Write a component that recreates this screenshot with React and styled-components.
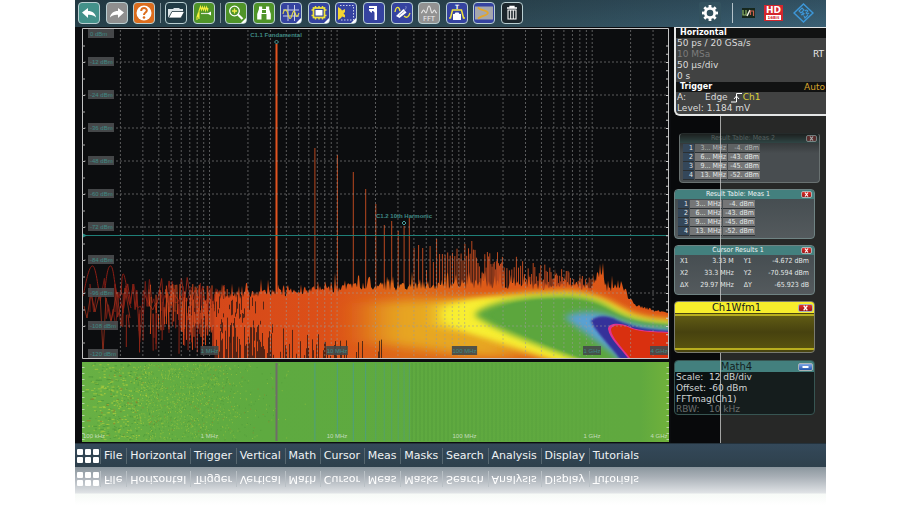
import styled, { createGlobalStyle, css } from 'styled-components';

const GlobalStyle = createGlobalStyle`
  * {
    box-sizing: border-box;
  }

  body {
    margin: 0;
    background: #fff;
    font-family: 'DejaVu Sans', Verdana, sans-serif;
  }

  button {
    font: inherit;
    color: inherit;
    cursor: pointer;
  }
`;

const Page = styled.div`
  padding: 0 74px 0 75px;
  overflow: hidden;
`;

const Screen = styled.main`
  background: #0b0c0f;
`;

/* ---------- toolbar ---------- */

const Toolbar = styled.header`
  display: flex;
  align-items: center;
  height: 27px;
  padding: 0 12px 1px 3px;
  background: linear-gradient(rgba(20, 32, 40, 0.25), rgba(20, 32, 40, 0)), linear-gradient(90deg, #26404a, #2f4b57 60%, #3b6074);
`;

const ToolGroup = styled.div`
  display: flex;
  gap: 5px;
  justify-content: space-between;
  flex: 0 1 ${(props) => props.$basis}px;
`;

const ToolDivider = styled.span`
  width: 1px;
  height: 20px;
  margin: 0 4px 0 5px;
  background: #7f939b;
`;

const ToolButton = styled.button`
  width: 22px;
  height: 22px;
  flex: none;
  padding: 0;
  border: 1px solid #b9cfd2;
  border-radius: 4px;
  background: ${(props) => props.$color};

  svg {
    display: block;
    width: 20px;
    height: 20px;
  }
`;

const StatusGroup = styled.div`
  display: flex;
  align-items: center;
  margin-left: auto;
`;

const GearButton = styled(ToolButton)`
  border: 0;
  border-radius: 2px;
  background: #33525f;

  svg {
    width: 22px;
    height: 22px;
  }
`;

const StatusDivider = styled(ToolDivider)`
  margin: 0 9px 0 11px;
  background: #b4c2c9;
`;

const HdBadge = styled.div`
  width: 19px;
  height: 16px;
  margin: 0 10px 0 9px;
  padding: 1px 2px;
  background: #d3262d;
  color: #fff;
  font-size: 9px;
  font-weight: bold;
  line-height: 8px;
  text-align: center;

  small {
    display: block;
    height: 5px;
    margin-top: 1px;
    background: #fff;
    color: #d3262d;
    font-size: 4px;
    line-height: 5px;
  }
`;

/* ---------- plots ---------- */

const Workspace = styled.section`
  display: flex;
`;

const PlotColumn = styled.div`
  flex: 1;
  min-width: 0;
  display: flex;
  flex-direction: column;
  gap: 3px;
  padding: 1px 2px 1px 7px;

  svg {
    display: block;
    width: 100%;
    height: auto;
  }
`;

const AxisText = styled.text`
  font-family: 'Liberation Sans', Arial, sans-serif;
  font-size: 6px;
  font-weight: ${(props) => (props.$bold ? 'bold' : 'normal')};
  fill: ${(props) => props.$fill || '#3f8a85'};
`;

/* ---------- side panel ---------- */

const SidePanel = styled.aside`
  position: relative;
  flex: 0 0 155px;
  display: flex;
  flex-direction: column;
  padding-left: 3px;
  background: linear-gradient(90deg, #08090b 49px, #272827 49px);

  &::after {
    content: '';
    position: absolute;
    top: 89px;
    bottom: 0;
    left: 49px;
    width: 1px;
    background: rgba(205, 205, 205, 0.75);
  }
`;

const InfoBox = styled.section`
  position: relative;
  margin-bottom: 17px;
  border: solid #e4e6e6;
  border-width: 1px 0 2px 2px;
  border-radius: 0 0 0 6px;
  background: #414242;
  color: #dcdcdc;
  font-size: 9px;
  line-height: 11px;
  overflow: hidden;
`;

const InfoTitle = styled.h2`
  display: flex;
  justify-content: space-between;
  margin: 0;
  padding: 0 1px 0 4px;
  background: #111212;
  color: #fff;
  font-size: 8px;
  font-weight: bold;
  line-height: 10px;

  span {
    color: #d8a52c;
    font-size: 9px;
    font-weight: normal;
  }
`;

const InfoRow = styled.div`
  display: flex;
  justify-content: space-between;
  padding: 0 2px 0 1px;
  color: ${(props) => (props.$dim ? '#7c7c7c' : '#dcdcdc')};
  white-space: nowrap;

  b {
    color: #e8e8e8;
    font-weight: normal;
  }
`;

const TriggerRow = styled(InfoRow)`
  justify-content: flex-start;

  span {
    width: 28px;
  }

  svg {
    width: 11px;
    height: 11px;
    margin: 0 1px 0 3px;
  }

  em {
    color: #dcd23a;
    font-style: normal;
  }
`;

const Card = styled.section`
  margin: 0 11px 6px 0;
  border: 1px solid #6f8383;
  border-radius: 4px;
  background: linear-gradient(#434b4f, #545a5d);
  color: #e4e8e8;
  font-family: 'DejaVu Sans Condensed', 'DejaVu Sans', sans-serif;
  font-size: 7px;
  overflow: hidden;
  ${(props) =>
    props.$ghost &&
    css`
      margin: 0 6px 6px 5px;
      border-color: #697171;
      border-top-color: #252b2b;
      background: linear-gradient(#242828, #484d50 40%, #484d50);
    `}
`;

const CardTitle = styled.h3`
  display: flex;
  align-items: center;
  margin: 0;
  padding-right: 2px;
  background: ${(props) => (props.$ghost ? 'linear-gradient(#1d2120, #2f4544)' : '#43807e')};
  color: ${(props) => (props.$ghost ? '#56605f' : '#f0f5f5')};
  font-size: 7px;
  font-weight: normal;
  line-height: 9px;

  span {
    flex: 1;
    text-align: center;
  }
`;

const CloseButton = styled.button`
  display: block;
  width: 11px;
  height: 7px;
  padding: 0;
  border: 1px solid #a9b4b4;
  border-radius: 2px;
  background: ${(props) => (props.$ghost ? '#7b2b2b' : 'linear-gradient(#e0302c, #9a1414)')};
  opacity: ${(props) => (props.$ghost ? 0.6 : 1)};

  svg {
    display: block;
    width: 100%;
    height: 100%;
  }
`;

const ResultTable = styled.table`
  margin: 1px 0 2px 2px;
  border-spacing: 1px 0;
  border-collapse: separate;
  line-height: 8px;

  th,
  td {
    height: 9px;
    padding: 0 1px;
    border-bottom: 1px solid #2b3033;
    font-weight: normal;
    text-align: right;
    white-space: nowrap;
  }

  th {
    width: 11px;
    background: #34475a;
  }

  td {
    width: 32px;
    background: #757677;
  }

  tr:first-child td {
    color: ${(props) => (props.$ghost ? '#b5b8b8' : '#e4e8e8')};
    background: ${(props) => (props.$ghost ? '#5f6263' : '#757677')};
  }
`;

const CursorTable = styled.table`
  width: 100%;
  padding: 0 5px 3px;
  border-spacing: 0;
  line-height: 12px;

  th {
    padding: 0;
    font-weight: normal;
    text-align: left;
  }

  td {
    padding: 0;
    text-align: right;
    white-space: nowrap;
  }

  td + th {
    padding-left: 10px;
  }
`;

const WaveCard = styled(Card)`
  position: relative;
  z-index: 1;
  margin-bottom: 7px;
  border-color: #7a7b70;
  background: #4a4510;
`;

const SignalTitle = styled(CardTitle)`
  padding-right: 1px;
  background: ${(props) => props.$color};
  color: #14201f;
  font-family: 'DejaVu Sans', sans-serif;
  font-size: 10px;
  line-height: 11px;

  ${CloseButton} {
    width: 15px;
    height: 8px;
  }
`;

const MinimizeButton = styled(CloseButton)`
  background: linear-gradient(#7fa6e6, #2456ac);
`;

const Trace = styled.div`
  height: 36px;
  margin: 1px 0 2px;
  border: solid #b8ae1e;
  border-width: 2px 0;
  background: linear-gradient(#605b14, #47420f 50%, #57520f);
`;

const MathCard = styled(Card)`
  margin-bottom: 0;
  border-color: #375552;
  background: linear-gradient(90deg, #0b1112 45px, #151d1d 45px);
  font-family: 'DejaVu Sans', sans-serif;
  font-size: 9px;
  line-height: 11px;
`;

const MathRow = styled.div`
  display: flex;
  padding-left: 1px;
  color: ${(props) => (props.$dim ? '#6a6d6d' : '#d0d4d4')};
  line-height: ${(props) => (props.$dim ? 9 : 11)}px;
  white-space: nowrap;

  span {
    width: 33px;
  }
`;

/* ---------- menu ---------- */

const MenuBar = styled.nav`
  display: flex;
  align-items: center;
  height: 24px;
  padding-left: 2px;
  border-top: 1px solid #24323c;
  background: linear-gradient(#34495a, #2e404c);
  color: #eef2f4;
`;

const GridButton = styled.button`
  display: grid;
  grid-template-columns: repeat(3, 6px);
  grid-auto-rows: 6px;
  gap: 2px;
  margin-right: 1px;
  padding: 0;
  border: 0;
  background: none;

  i {
    border-radius: 1px;
    background: #fff;
  }
`;

const MenuList = styled.div`
  display: flex;
  flex: 0 1 542px;
  justify-content: space-between;
`;

const MenuItem = styled.button`
  height: 16px;
  padding: 0 3px;
  border: 0;
  border-left: 1px solid #56666f;
  background: none;
  font-size: 11px;
  line-height: 14px;
`;

const Reflection = styled.div`
  height: 39px;
  background: linear-gradient(#8b969e, #a9b0b7 10px, #e0e3e6 26px, #f7faf7 27px, #fff 38px);

  ${MenuBar} {
    border: 0;
    background: none;
    color: #fff;
    transform: scaleY(-1);
  }

  ${MenuItem} {
    border-color: #b9c0c5;
  }
`;

/* ---------- icons ---------- */

const Corner = () => <path d='M20 15v3a2 2 0 0 1-2 2h-3z' fill='#fff' />;

const arrow = <path d='M17 9.500 11 5v3c-4.500 0-7.500 2.500-8 6.500 2-2 4.500-3 8-2.700V15z' fill='#fff' />;

const icons = {
  undo: <g transform='translate(20 0) scale(-1 1)'>{arrow}</g>,
  redo: arrow,
  help: (
    <>
      <circle cx='10' cy='10' r='7.500' fill='#fff' />
      <path d='M7.200 8c0-4 5.800-3.800 5.600-.4C12.700 9.600 10 9.500 10 12' fill='none' stroke='#dc6d1d' strokeWidth='2' />
      <circle cx='10' cy='14.500' r='1.300' fill='#dc6d1d' />
    </>
  ),
  open: (
    <>
      <path d='M2 15V6h5l1-1h5l1 1h3v3H7z' fill='#dfe6e9' />
      <path d='M6 8.500h12.500L15 15H2.500z' fill='#fff' stroke='#1d333c' strokeWidth='.8' />
    </>
  ),
  preset: (
    <>
      <path d='M3 17v-3l1-3 1 5V8l1.500-4.500L7.500 7l1-3 1 3 1-3 1 3.500 1-3.500 1 3 .5-2' fill='none' stroke='#f3ee3c' strokeWidth='1.100' />
      <path d='M7 10.500h10' stroke='#dfe9d0' strokeWidth='1.200' />
      <path d='m13.500 10.500 3.500-2v4z' fill='#fff' />
    </>
  ),
  zoom: (
    <>
      <circle cx='8.500' cy='8' r='4.800' fill='none' stroke='#fff' strokeWidth='1.300' />
      <path d='M8.500 5.500v5M6 8h5' stroke='#f4ee4a' strokeWidth='1.300' />
      <path d='m12 11.500 4.500 4.500' stroke='#fff' strokeWidth='2.200' />
      <Corner />
    </>
  ),
  find: (
    <path
      d='M5 3.500h3.200V6H12V3.500h3.200V6l1.600 5v5.500h-4.300V11h-5v5.500H3.200V11L5 6zM8 7v3h4V7z'
      fill='#fff'
      fillRule='evenodd'
    />
  ),
  cross: (
    <>
      <path d='M7 2v16M13.500 2v16M2 7h16M2 13h16' stroke='#c9cfe8' strokeWidth='1' />
      <path d='M2 11c1-5.500 3.500-5.500 5 0s2.500 6 4 1 2.500-5 3.500-1 2 3 3.500-1' fill='none' stroke='#e0d84c' strokeWidth='1.100' />
      <Corner />
    </>
  ),
  chip: (
    <>
      <rect x='4.500' y='5' width='11' height='9.500' fill='none' stroke='#efe33a' strokeWidth='1.700' />
      <rect x='6.500' y='7' width='7' height='5.500' fill='#fff' />
      <path
        d='M6.500 3v2M10 3v2M13.500 3v2M6.500 14.500v2M10 14.500v2M13.500 14.500v2M2.500 7h2M2.500 12.500h2M15.500 7h2M15.500 12.500h2'
        stroke='#efe33a'
        strokeWidth='1.500'
      />
      <Corner />
    </>
  ),
  gate: (
    <>
      <path d='M4 2.500h13.500V17H4' fill='none' stroke='#c9cfe8' strokeWidth='1' strokeDasharray='1.500 1.500' />
      <path d='M2 4l3 2 1 1.500L9 6v3l-1.500 1.500L9 12v2.500l-3-1-1 1.500-3 2z' fill='#f3d433' />
      <Corner />
    </>
  ),
  caliper: <path d='M5 3h8v14h-2.500V9.500L9 8H8v1.500H7L5 7.500V6h5V5H5z' fill='#fff' />,
  probe: (
    <>
      <path d='M3 9c1-6 4-6 5-1M12 13c3 3 5 0 6-3' fill='none' stroke='#f0e63c' strokeWidth='1.300' />
      <path d='m4 13 7.500-7 3 3.500-7 5.500z' fill='#fff' />
      <path d='m7 12.500 5.500-4.500M12.500 7c2-2 2-3 1-4' stroke='#8f97c9' strokeWidth='.9' fill='none' />
    </>
  ),
  fft: (
    <>
      <path
        d='M2 10c1.500 0 1.500-3 2.500-3S6 10 7 10s1.500-7 3-7 2 7 3 7 1.500-3 2.500-3S16 10 18 10'
        fill='none'
        stroke='#e8e8e8'
        strokeWidth='1.100'
      />
      <text x='10' y='17.500' fontSize='7' textAnchor='middle' fill='#eee'>
        FFT
      </text>
    </>
  ),
  trigger: (
    <>
      <text x='10' y='5.500' fontSize='6' fontWeight='bold' textAnchor='middle' fill='#fff'>
        T
      </text>
      <path d='M2 15h1.500L5.500 7h9l2 8H18' fill='none' stroke='#f0e23a' strokeWidth='1.500' />
      <path d='M6 11h1.500l1-1.500h3l1 1.500H14v6H6z' fill='#fff' />
    </>
  ),
  mask: (
    <>
      <rect x='1' y='3.500' width='18' height='13' fill='#a5a7ad' />
      <path d='M4 4.500c2 3 9 2.500 10 5.500-1 3-5 2-10 5.500' fill='none' stroke='#e2a62c' strokeWidth='1.800' />
    </>
  ),
  trash: (
    <>
      <path d='M5 5h10M8 4.500V3.500h4v1' stroke='#fff' strokeWidth='1.300' fill='none' />
      <path d='M6 7h8v9H6z' fill='none' stroke='#fff' strokeWidth='1.100' />
      <path d='M8.700 7v9M11.300 7v9' stroke='#fff' strokeWidth='1' />
    </>
  ),
};

const Icon = ({ name }) => (
  <svg viewBox='0 0 20 20' aria-hidden='true'>
    {icons[name]}
  </svg>
);

const Gear = () => (
  <svg viewBox='0 0 22 22' aria-hidden='true'>
    <circle cx='11' cy='11' r='4.700' fill='none' stroke='#fff' strokeWidth='2.800' />
    {[0, 45, 90, 135, 180, 225, 270, 315].map((angle) => (
      <rect key={angle} x='9.600' y='3' width='2.800' height='3' fill='#fff' transform={`rotate(${angle} 11 11)`} />
    ))}
  </svg>
);

const WaveStatus = () => (
  <svg width='13' height='10' viewBox='0 0 13 10' aria-hidden='true'>
    <rect width='13' height='10' fill='#16271c' />
    <path d='M1 2v5h3V2' stroke='#8fb86a' strokeWidth='1.200' fill='none' />
    <path d='m5 8 3-6' stroke='#f0f0e0' strokeWidth='1.500' />
    <path d='M8.500 7V3h3v5' stroke='#c7604c' strokeWidth='1.200' fill='none' />
  </svg>
);

const Diamond = () => (
  <svg width='21' height='20' viewBox='0 0 21 20' aria-hidden='true'>
    <path d='M10.500 1 20 10l-9.500 9L1 10z' fill='none' stroke='#3d97d8' strokeWidth='1.500' />
    <path
      d='M6 8l3-3 2 2-3 3zm2.500 1 3 2M11 12c-2 0-2-2 0-2m1-2c2-2 4 0 2 1s0 3 2 1m-6 1-2 1m3 1 1 2 3-3'
      fill='none'
      stroke='#3d97d8'
      strokeWidth='1.100'
    />
  </svg>
);

const Cross = () => (
  <svg viewBox='0 0 9 5' aria-hidden='true'>
    <path d='m3 .5 3 4M6 .5l-3 4' stroke='#fff' strokeWidth='1.200' />
  </svg>
);

const Minus = () => (
  <svg viewBox='0 0 9 5' aria-hidden='true'>
    <path d='M2 2.500h5' stroke='#fff' strokeWidth='1.500' />
  </svg>
);

/* ---------- plot data ---------- */

const DECADE = 127.55;
const LEFT = 82;
const RIGHT = 669;
const FUNDAMENTAL = 276.5;

const createRandom = (seed) => {
  let value = seed;
  return () => {
    value = (value * 1664525 + 1013904223) % 4294967296;
    return value / 4294967296;
  };
};

// x position for a frequency in units of 100 kHz
const freqX = (f) => LEFT + DECADE * Math.log10(f);
const harmonicX = (n) => FUNDAMENTAL + DECADE * Math.log10(n);

const gridX = [];
for (let decade = 0; decade < 5; decade++) {
  for (let step = 1; step < 10; step++) {
    const x = freqX(step * 10 ** decade);
    if (x > LEFT + 1 && x < RIGHT - 2) gridX.push(x);
  }
}
const gridY = [1, 2, 3, 4, 5, 6, 7, 8, 9].map((i) => 29 + 33 * i);

const interpolate = (points, x) => {
  for (let i = 1; i < points.length; i++) {
    if (x <= points[i][0]) {
      const [x0, y0] = points[i - 1];
      const [x1, y1] = points[i];
      return y0 + ((y1 - y0) * (x - x0)) / (x1 - x0);
    }
  }
  return points[points.length - 1][1];
};

const ceiling = [
  [82, 296], [200, 296], [300, 290], [350, 286], [420, 285], [500, 284], [560, 285], [592, 286],
  [597, 276], [600, 270], [604, 279], [609, 291], [613, 283], [622, 284], [628, 296], [636, 305], [650, 309], [669, 314],
];

const buildNoise = () => {
  const random = createRandom(41);
  let path = 'M215,359';
  for (let x = 215; x <= RIGHT; x++) {
    const spread = x > 630 ? 3 : 9;
    const spike = x < 630 && random() > 0.86 ? 4 + random() * 10 : 0;
    const y = interpolate(ceiling, x) + (random() - 0.4) * spread - spike;
    path += `L${x},${y.toFixed(1)}`;
  }
  return `${path}L${RIGHT},359Z`;
};

// dark slots rising from the floor, and gaps in the thin left part of the trace
const buildSlots = () => {
  const random = createRandom(9);
  let path = '';
  for (let x = 215; x < 390; x++) {
    const t = (x - 215) / 175;
    if (random() < 0.85 - t * 0.7) {
      const depth = (4 + random() * 40) * (1 - t * 0.55);
      path += `M${x + 0.5},359V${(359 - depth).toFixed(1)}`;
    }
    if (random() < 0.7 - t * 2) {
      const y = 294 + random() * 34;
      path += `M${x + 0.5},${y.toFixed(1)}v${(3 + random() * 14).toFixed(1)}`;
    }
  }
  return path;
};

// separate strokes that grow denser towards the solid part of the trace
const buildStrokes = (seed, from, to, density) => {
  const random = createRandom(seed);
  let path = '';
  for (let x = from; x < to; x += 0.8) {
    const t = (x - from) / (to - from);
    if (random() < density * (0.12 + t)) {
      const y = 284 + random() * 32;
      const lean = (random() - 0.5) * 3 * (1 - t);
      path += `M${x.toFixed(1)},${y.toFixed(1)}l${lean.toFixed(1)},${(8 + random() * (30 + t * 14)).toFixed(1)}`;
    }
  }
  return path;
};

const buildStreaks = (seed, from, to, step) => {
  const random = createRandom(seed);
  let path = `M${from},312`;
  let up = true;
  for (let x = from; x < to; x += step * (0.5 + random())) {
    const y = up ? 276 + random() * 34 : 300 + random() * random() * 58;
    path += `L${x.toFixed(1)},${y.toFixed(1)}`;
    up = !up;
  }
  return path;
};

const peakTops = [
  42, 148, 155, 172, 189, 204, 225, 221, 231, 226, 218, 248, 245, 248, 270, 246, 262, 239, 254, 254,
];

const denseTops = [
  [450, 248], [454, 244], [461, 253], [466, 245], [470, 240], [474, 241], [480, 264], [487, 254], [496, 253],
  [508, 260], [520, 257], [527, 264], [541, 265], [552, 266], [561, 269], [575, 277], [590, 278],
];

const buildPeaks = () => {
  const random = createRandom(77);
  let path = '';
  peakTops.forEach((top, i) => {
    if (i > 0) path += `M${harmonicX(i + 1).toFixed(1)},${top}V290`;
  });
  for (let n = 21; n < 300; n += n > 60 ? 3 : 1) {
    const x = harmonicX(n);
    const top = interpolate(denseTops, x) + random() * 20 - 3;
    path += `M${x.toFixed(1)},${Math.min(top, 288).toFixed(1)}V290`;
  }
  return path;
};

// long and sparse on the left, turning into fine grain that thins out to the right
const buildSpecks = (seed, count) => {
  const random = createRandom(seed);
  let path = '';
  for (let i = 0; i < count; i++) {
    const x = LEFT + 1 + 230 * (random() * 0.55 + random() * random() * 0.45);
    const y = 364 + random() * 76;
    const length = 0.7 + random() * Math.max(0, 4 - (x - LEFT) / 18);
    path += `M${x.toFixed(1)},${y.toFixed(1)}h${length.toFixed(1)}`;
  }
  return path;
};

const noise = buildNoise();
const slots = buildSlots();
const peaks = buildPeaks();

const freqLabels = [
  { x: 209.5, label: '1 MHz' },
  { x: 337, label: '10 MHz' },
  { x: 464.5, label: '100 MHz' },
  { x: 592, label: '1 GHz' },
  { x: 659, label: '4 GHz' },
];

const Spectrum = () => (
  <svg viewBox='82 28 587 331' role='img' aria-label='FFT spectrum of Ch1'>
    <defs>
      <linearGradient id='heat' gradientUnits='userSpaceOnUse' x1='215' x2='669' y1='0' y2='0'>
        <stop offset='0' stopColor='#d5481a' />
        <stop offset='.25' stopColor='#dc5018' />
        <stop offset='.42' stopColor='#de6a1a' />
        <stop offset='.6' stopColor='#dd5a18' />
        <stop offset='1' stopColor='#dc5417' />
      </linearGradient>
      <filter id='soft1'>
        <feGaussianBlur stdDeviation='1' />
      </filter>
      <filter id='soft3'>
        <feGaussianBlur stdDeviation='3' />
      </filter>
      <filter id='softTip' x='-60%' width='220%' y='-30%' height='160%'>
        <feGaussianBlur stdDeviation='10 3' />
      </filter>
      <filter id='softGlow' x='-50%' width='200%' y='-50%' height='200%'>
        <feGaussianBlur stdDeviation='20 5' />
      </filter>
      <clipPath id='trace'>
        <path d={noise} />
      </clipPath>
    </defs>
    <rect x='82' y='28' width='587' height='331' fill='#0c0d0f' />

    <g fill='none' strokeWidth='1'>
      <path d={buildStreaks(5, 90, 225, 3)} stroke='#6e1a14' />
      <path d={buildStreaks(23, 115, 225, 3)} stroke='#8a2216' />
      <path d='M83 296c2-8 5-28 9-30s6 24 8 30 3-14 4-6 2-22 6-24 4 22 8 30 3-20 5-22 5 26 8 34' stroke='#8c1d14' />
      <path d='M84 306l3 12 4-26 4 20 5-20 3 62 3-56 5 24 6-30 4 34 4-38 5 30' stroke='#a1301b' strokeWidth='.8' />
      <path d={buildStrokes(31, 120, 225, 0.8)} stroke='#8d2416' />
      <path d={buildStrokes(57, 140, 228, 1.2)} stroke='#d0481c' />
    </g>
    <path d={peaks} stroke='#b9481f' strokeWidth='1' />
    <path d='M276.500 44V300' stroke='#e25420' strokeWidth='2' />

    <g clipPath='url(#trace)'>
      <rect x='215' y='250' width='454' height='109' fill='url(#heat)' />
      <path d='M375 303L440 299L520 298V358H480L375 342Z' fill='#e7a722' filter='url(#softGlow)' />
      <path
        d='M440 315C455 303 490 295 550 292C588 289 606 299 624 309C640 318 655 318 680 321V370H575C540 354 470 338 440 315Z'
        fill='#f8ee31'
        filter='url(#soft3)'
      />
      <path d='M440 305C460 301 480 299 500 299V336C480 334 460 330 440 326Z' fill='#f8ee31' filter='url(#softTip)' />
      <path
        d='M474 315C484 304 515 297 555 296C592 294 604 304 618 312C636 322 655 322 680 325V370H606C560 352 500 334 474 315Z'
        fill='#5ba63d'
        filter='url(#soft3)'
      />
      <path
        d='M490 315C500 305 520 300 555 299C588 298 600 306 614 313C634 324 655 324 680 326V370H610C570 352 510 334 490 315Z'
        fill='#5ba63d'
        filter='url(#soft1)'
      />
      <path
        d='M564 317C578 310 600 311 613 317C635 326 650 327 680 329V370H630C610 348 580 330 564 317Z'
        fill='#5aa0d2'
        filter='url(#soft3)'
      />
      <path
        d='M591 321C596 315 608 315 617 320C635 328 650 330 680 331V370H628C615 350 595 332 591 321Z'
        fill='#34309a'
        filter='url(#soft1)'
      />
      <path d='M608 329C608 323 620 322 630 327C640 331 650 331 680 332.500V370H636C626 352 610 341 608 329Z' fill='#e0338e' />
      <path d='M611 330C611 325 621 323 631 328.500C641 332 650 332 680 333.500V370H638C628 352 612 340 611 330Z' fill='#d9300f' />
    </g>
    <path d={slots} stroke='#171011' strokeWidth='.8' opacity='.85' />

    <g stroke='#9b9b9b' strokeWidth='1' strokeDasharray='2 2' opacity='.55'>
      {gridX.map((x) => (
        <line key={x} x1={x} x2={x} y1='30' y2='358' />
      ))}
      {gridY.map((y) => (
        <line key={y} x1='84' x2='667' y1={y} y2={y} />
      ))}
    </g>
    <path d='M82 235.500H669' stroke='#1f7f78' />
    <path d='m82 233 5 2.500-5 2.500z' fill='#2a8f88' />

    <path d='M82.500 28.500h586v330h-586z' fill='none' stroke='#c4c4c4' />
    <path d='M83 45.500V358' stroke='#aaa' strokeWidth='4' strokeDasharray='1 15.500' />
    <path d='M668 45.500V358' stroke='#ccc' strokeWidth='4' strokeDasharray='1 7.250' />

    {[0, 12, 24, 36, 48, 60, 72, 84, 96, 108, 120].map((value, i) => {
      const y = i === 0 ? 34 : i === 10 ? 354 : 29 + 33 * i;
      return (
        <g key={value}>
          <rect x='88' y={y - 5} width={i > 8 ? 30 : 26} height='9' fill='#4b4e50' opacity='.9' />
          <AxisText x='90' y={y + 2}>{`${i ? '-' : ''}${value} dBm`}</AxisText>
        </g>
      );
    })}
    {freqLabels.map(({ x, label }) => (
      <g key={label}>
        <rect x={x - label.length * 1.8} y='346' width={label.length * 3.6} height='9' fill='#42494a' opacity='.9' />
        <AxisText x={x} y='353' textAnchor='middle'>
          {label}
        </AxisText>
      </g>
    ))}

    <AxisText x='276' y='37' textAnchor='middle' $bold>
      C1.1 Fundamental
    </AxisText>
    <AxisText x='404' y='218' textAnchor='middle' $bold>
      C1.2 10th Harmonic
    </AxisText>
    <path d='m276.500 40 2 2-2 2-2-2zM404 221l2 2-2 2-2-2z' fill='#0c0d0f' stroke='#4a9f9c' />
  </svg>
);

const Spectrogram = () => (
  <svg viewBox='82 362 587 80' role='img' aria-label='Spectrogram'>
    <defs>
      <linearGradient id='floor'>
        <stop offset='0' stopColor='#68b044' />
        <stop offset='.3' stopColor='#5eaa40' />
        <stop offset='.95' stopColor='#60a93f' />
        <stop offset='1' stopColor='#70b13b' />
      </linearGradient>
    </defs>
    <rect x='82' y='362' width='587' height='80' fill='url(#floor)' />
    <path d={buildSpecks(3, 1000)} stroke='#b0cf3c' strokeWidth='.7' />
    <path d={buildSpecks(8, 600)} stroke='#4a9338' strokeWidth='.7' />
    <path d={buildSpecks(14, 100)} stroke='#a77a25' strokeWidth='.7' />
    <path d='M276.500 363V441' stroke='#6f6c69' strokeWidth='2' />
    {[2, 3, 4, 5, 6, 7, 8, 9, 10, 11].map((n) => (
      <path key={n} d={`M${harmonicX(n)} 363V441`} stroke='#4a9c8c' opacity={n < 6 ? 0.8 : 0.5} />
    ))}
    {Array.from({ length: 50 }, (_, i) => (
      <path key={i} d={`M${412 + i * 4} 363V441`} stroke='#3d8036' opacity={0.3 - i * 0.005} />
    ))}
    <path d='M83 367V440M668 367V440' stroke='#d5e5cc' strokeWidth='3' strokeDasharray='1 5' opacity='.7' />
    <AxisText x='83' y='438' $fill='#c5dcbd'>
      100 kHz
    </AxisText>
    {freqLabels.map(({ x, label }) => (
      <AxisText key={label} x={x} y='438' textAnchor='middle' $fill='#c5dcbd'>
        {label}
      </AxisText>
    ))}
  </svg>
);

const toolGroups = [
  {
    basis: 77,
    tools: [
      ['undo', 'Undo', '#43918a'],
      ['redo', 'Redo', '#8f8f8f'],
      ['help', 'Help', '#dc6d1d'],
    ],
  },
  {
    basis: 50,
    tools: [
      ['open', 'Open', '#213b45'],
      ['preset', 'Preset', '#4f9429'],
    ],
  },
  {
    basis: 298,
    tools: [
      ['zoom', 'Zoom', '#4f9429'],
      ['find', 'Search', '#4f9429'],
      ['cross', 'Cursor', '#3543a0'],
      ['chip', 'Hardware', '#3543a0'],
      ['gate', 'Gate', '#3543a0'],
      ['caliper', 'Measurement', '#3543a0'],
      ['probe', 'Probe', '#3543a0'],
      ['fft', 'FFT', '#929292'],
      ['trigger', 'Trigger', '#3543a0'],
      ['mask', 'Mask test', '#3543a0'],
      ['trash', 'Delete', '#1c262c'],
    ],
  },
];

const results = [
  ['3... MHz', '-4. dBm'],
  ['6... MHz', '-43. dBm'],
  ['9... MHz', '-45. dBm'],
  ['13. MHz', '-52. dBm'],
];

const cursors = [
  ['X1', '3.33 M', 'Y1', '-4.672 dBm'],
  ['X2', '33.3 MHz', 'Y2', '-70.594 dBm'],
  ['ΔX', '29.97 MHz', 'ΔY', '-65.923 dB'],
];

const menu = [
  'File', 'Horizontal', 'Trigger', 'Vertical', 'Math', 'Cursor', 'Meas', 'Masks', 'Search', 'Analysis', 'Display', 'Tutorials',
];

const ResultCard = ({ title, ghost }) => (
  <Card $ghost={ghost}>
    <CardTitle $ghost={ghost}>
      <span>{title}</span>
      <CloseButton $ghost={ghost} aria-label={`Close ${title}`}>
        <Cross />
      </CloseButton>
    </CardTitle>
    <ResultTable $ghost={ghost}>
      <tbody>
        {results.map(([freq, level], i) => (
          <tr key={freq}>
            <th scope='row'>{i + 1}</th>
            <td>{freq}</td>
            <td>{level}</td>
          </tr>
        ))}
      </tbody>
    </ResultTable>
  </Card>
);

const Menu = ({ mirrored }) => (
  <MenuBar aria-hidden={mirrored} inert={mirrored}>
    <GridButton aria-label='Applications'>
      {[0, 1, 2, 3, 4, 5].map((cell) => (
        <i key={cell} />
      ))}
    </GridButton>
    <MenuList>
      {menu.map((item) => (
        <MenuItem key={item}>{item}</MenuItem>
      ))}
    </MenuList>
  </MenuBar>
);

const App = () => (
  <Page>
    <GlobalStyle />
    <Screen>
      <Toolbar>
        {toolGroups.map(({ basis, tools }, i) => [
          i > 0 && <ToolDivider key={`divider-${basis}`} />,
          <ToolGroup key={basis} $basis={basis}>
            {tools.map(([name, label, color]) => (
              <ToolButton key={name} $color={color} aria-label={label}>
                <Icon name={name} />
              </ToolButton>
            ))}
          </ToolGroup>,
        ])}
        <StatusGroup>
          <GearButton aria-label='Settings'>
            <Gear />
          </GearButton>
          <StatusDivider />
          <WaveStatus />
          <HdBadge>
            HD<small>16Bit</small>
          </HdBadge>
          <Diamond />
        </StatusGroup>
      </Toolbar>

      <Workspace>
        <PlotColumn>
          <Spectrum />
          <Spectrogram />
        </PlotColumn>

        <SidePanel>
          <InfoBox>
            <InfoTitle>Horizontal</InfoTitle>
            <InfoRow>50 ps / 20 GSa/s</InfoRow>
            <InfoRow $dim>
              10 MSa <b>RT</b>
            </InfoRow>
            <InfoRow>50 µs/div</InfoRow>
            <InfoRow>0 s</InfoRow>
            <InfoTitle>
              Trigger <span>Auto</span>
            </InfoTitle>
            <TriggerRow>
              <span>A:</span>Edge
              <svg viewBox='0 0 11 11' aria-hidden='true'>
                <path d='M0 10h5.500V1.500H11M3 7l2.500-3L8 7' fill='none' stroke='#fff' />
              </svg>
              <em>Ch1</em>
            </TriggerRow>
            <InfoRow>Level: 1.184 mV</InfoRow>
          </InfoBox>

          <ResultCard title='Result Table: Meas 2' ghost />
          <ResultCard title='Result Table: Meas 1' />

          <Card>
            <CardTitle>
              <span>Cursor Results 1</span>
              <CloseButton aria-label='Close Cursor Results 1'>
                <Cross />
              </CloseButton>
            </CardTitle>
            <CursorTable>
              <tbody>
                {cursors.map(([x, xValue, y, yValue]) => (
                  <tr key={x}>
                    <th scope='row'>{x}</th>
                    <td>{xValue}</td>
                    <th scope='row'>{y}</th>
                    <td>{yValue}</td>
                  </tr>
                ))}
              </tbody>
            </CursorTable>
          </Card>

          <WaveCard>
            <SignalTitle $color='#f7ee2c'>
              <span>Ch1Wfm1</span>
              <CloseButton aria-label='Close Ch1Wfm1'>
                <Cross />
              </CloseButton>
            </SignalTitle>
            <Trace />
          </WaveCard>

          <MathCard>
            <SignalTitle $color='#43807e'>
              <span>Math4</span>
              <MinimizeButton aria-label='Minimize Math4'>
                <Minus />
              </MinimizeButton>
            </SignalTitle>
            <MathRow>
              <span>Scale:</span>12 dB/div
            </MathRow>
            <MathRow>
              <span>Offset:</span>-60 dBm
            </MathRow>
            <MathRow>FFTmag(Ch1)</MathRow>
            <MathRow $dim>
              <span>RBW:</span>10 kHz
            </MathRow>
          </MathCard>
        </SidePanel>
      </Workspace>

      <Menu />
    </Screen>
    <Reflection>
      <Menu mirrored />
    </Reflection>
  </Page>
);

export default App;
